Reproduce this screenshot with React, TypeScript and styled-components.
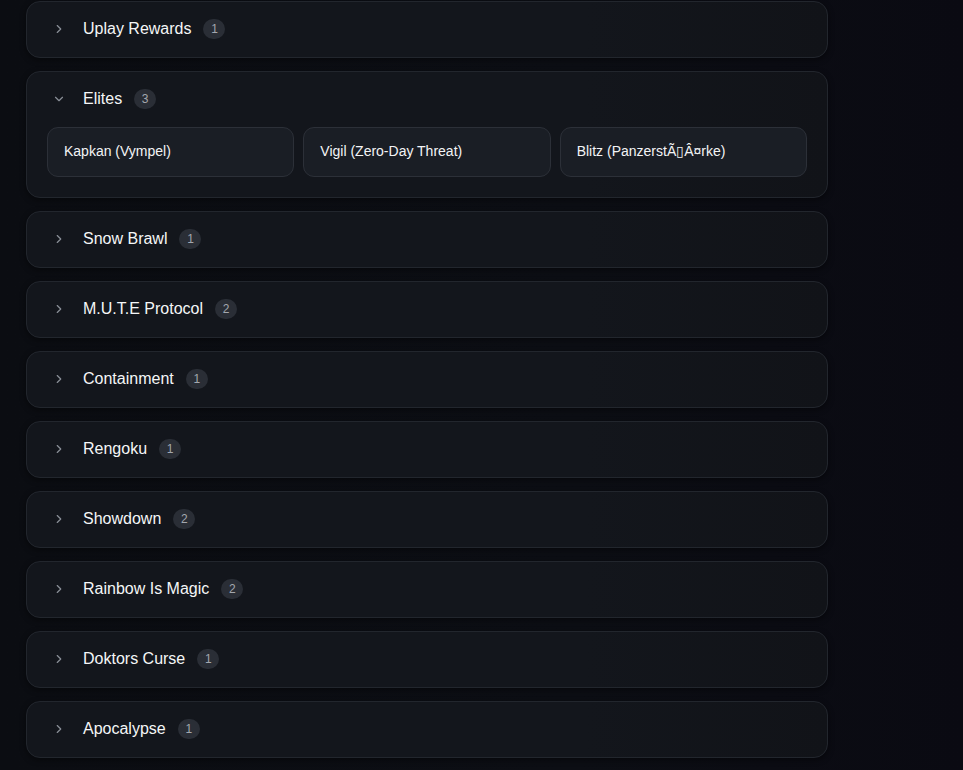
import React from "react";
import styled, { createGlobalStyle } from "styled-components";
import { ChevronRight, ChevronDown } from "lucide-react";

const Global = createGlobalStyle`
  html, body { margin: 0; padding: 0; }
  body {
    background: linear-gradient(90deg, #0b0d12 0%, #0c0e14 60%, #0a0a12 100%);
    min-height: 770px;
    font-family: "Liberation Sans", Arial, sans-serif;
    color: #f3f4f6;
    overflow: hidden;
  }
`;

const Page = styled.div`
  padding: 1px 0 0 26px;
`;

const List = styled.div`
  width: 802px;
  display: flex;
  flex-direction: column;
  gap: 13px;
`;

const Card = styled.div`
  box-sizing: border-box;
  border: 1px solid #22262d;
  border-radius: 14px;
  background: linear-gradient(90deg, #13161c 0%, #13161c 70%, #111318 100%);
  box-shadow: 0 2px 6px rgba(0, 0, 0, 0.45);
`;

const Header = styled.div`
  box-sizing: border-box;
  height: 55px;
  display: flex;
  align-items: center;
  padding: 0 0 2px 25px;
`;

const Icon = styled.span`
  display: flex;
  width: 14px;
  color: #8a8f98;
  margin-right: 17px;
`;

const Title = styled.span`
  font-size: 16px;
  color: #f5f6f7;
`;

const Badge = styled.span`
  margin-left: 12px;
  min-width: 22px;
  height: 20px;
  padding: 0 6px;
  box-sizing: border-box;
  border-radius: 10px;
  background: #2a2e36;
  color: #a3a7ae;
  font-size: 12px;
  display: flex;
  align-items: center;
  justify-content: center;
`;

const Grid = styled.div`
  display: grid;
  grid-template-columns: repeat(3, 1fr);
  gap: 9px;
  padding: 0 20px 20px 20px;
`;

const Item = styled.div`
  box-sizing: border-box;
  height: 50px;
  border: 1px solid #2c3038;
  border-radius: 11px;
  background: #1a1e25;
  display: flex;
  align-items: center;
  padding: 0 0 3px 16px;
  font-size: 14px;
  color: #f3f4f6;
`;

type Group = { name: string; items: string[]; open?: boolean };

const groups: Group[] = [
  { name: "Uplay Rewards", items: ["x"] },
  {
    name: "Elites",
    open: true,
    items: ["Kapkan (Vympel)", "Vigil (Zero-Day Threat)", "Blitz (PanzerstÃ\u25AFÂ¤rke)"],
  },
  { name: "Snow Brawl", items: ["x"] },
  { name: "M.U.T.E Protocol", items: ["x", "y"] },
  { name: "Containment", items: ["x"] },
  { name: "Rengoku", items: ["x"] },
  { name: "Showdown", items: ["x", "y"] },
  { name: "Rainbow Is Magic", items: ["x", "y"] },
  { name: "Doktors Curse", items: ["x"] },
  { name: "Apocalypse", items: ["x"] },
];

export default function App() {
  return (
    <>
      <Global />
      <Page>
        <List>
          {groups.map((g) => (
            <Card key={g.name}>
              <Header>
                <Icon>
                  {g.open ? <ChevronDown size={14} strokeWidth={2} /> : <ChevronRight size={14} strokeWidth={2} />}
                </Icon>
                <Title>{g.name}</Title>
                <Badge>{g.items.length}</Badge>
              </Header>
              {g.open && (
                <Grid>
                  {g.items.map((it) => (
                    <Item key={it}>{it}</Item>
                  ))}
                </Grid>
              )}
            </Card>
          ))}
        </List>
      </Page>
    </>
  );
}
